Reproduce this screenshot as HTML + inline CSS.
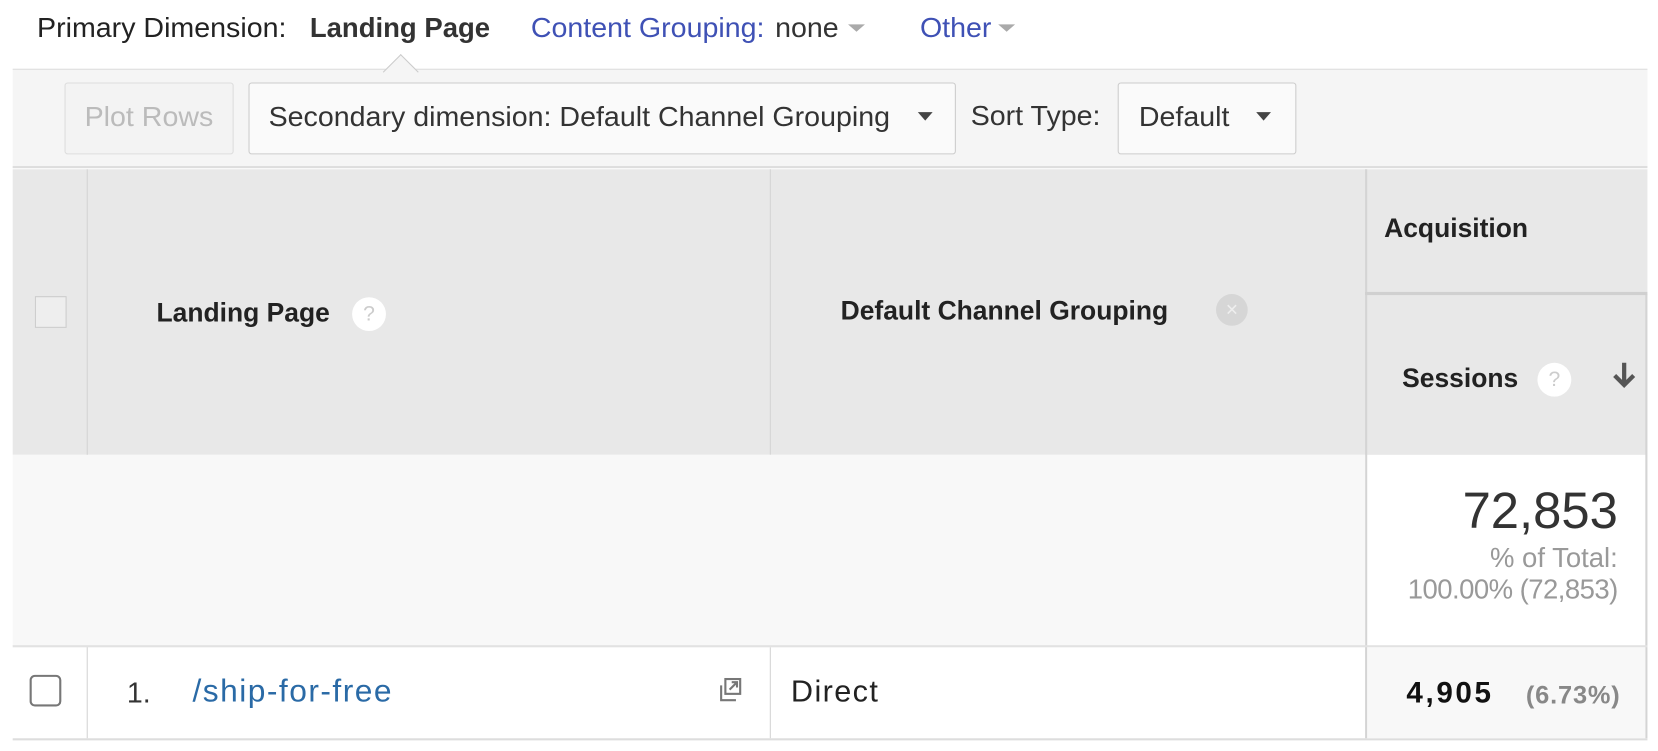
<!DOCTYPE html>
<html><head><meta charset="utf-8"><style>
*{margin:0;padding:0;box-sizing:border-box}
body{width:1658px;height:751px;background:#fff;position:relative;overflow:hidden;font-family:"Liberation Sans",Arial,sans-serif;color:#222}
#w{position:absolute;left:0;top:0;width:1568px;height:710px;transform-origin:0 0;transform:scale(1.0574,1.0577)}
.a{position:absolute;white-space:nowrap}
.t{position:absolute;white-space:nowrap;transform-origin:0 50%;transform:scaleX(1.04)}
.b{position:absolute;white-space:nowrap;transform-origin:0 50%}
.box{position:absolute}
</style></head><body><div id="w">
<div class="t" style="left:35px;top:11px;font-size:26px;color:#222">Primary Dimension:</div>
<div class="b" style="left:293px;top:11px;font-size:26px;font-weight:bold;color:#333">Landing Page</div>
<div class="t" style="left:502px;top:11px;font-size:26px;color:#3f51b5">Content Grouping:</div>
<div class="t" style="left:733px;top:11px;font-size:26px;color:#333">none</div>
<div class="a" style="left:802px;top:23px;width:0;height:0;border-left:8px solid transparent;border-right:8px solid transparent;border-top:7px solid #aaa"></div>
<div class="t" style="left:870px;top:11px;font-size:26px;color:#3f51b5">Other</div>
<div class="a" style="left:944px;top:23px;width:0;height:0;border-left:8px solid transparent;border-right:8px solid transparent;border-top:7px solid #aaa"></div>
<div class="box" style="left:12px;top:65px;width:1546px;height:94px;background:#f5f5f5;border-top:1px solid #ddd;border-bottom:2px solid #ddd"></div>
<div class="a" style="left:367px;top:56px;width:24px;height:24px;background:#f5f5f5;border-left:1px solid #ccc;border-top:1px solid #ccc;transform:rotate(45deg)"></div>
<div class="box" style="left:61px;top:78px;width:160px;height:68px;border:1px solid #ddd;border-radius:3px;background:#f3f3f3"></div>
<div class="t" style="left:80px;top:95px;font-size:26px;color:#bbb">Plot Rows</div>
<div class="box" style="left:235px;top:78px;width:669px;height:68px;border:1px solid #ccc;border-radius:3px;background:#fafafa"></div>
<div class="t" style="left:254px;top:95px;font-size:26px;color:#333">Secondary dimension: Default Channel Grouping</div>
<div class="a" style="left:868px;top:106px;border-left:7px solid transparent;border-right:7px solid transparent;border-top:8px solid #444"></div>
<div class="t" style="left:918px;top:94px;font-size:26px;color:#333">Sort Type:</div>
<div class="box" style="left:1057px;top:78px;width:169px;height:68px;border:1px solid #ccc;border-radius:3px;background:#fafafa"></div>
<div class="t" style="left:1077px;top:95px;font-size:26px;color:#333">Default</div>
<div class="a" style="left:1188px;top:106px;border-left:7px solid transparent;border-right:7px solid transparent;border-top:8px solid #444"></div>
<div class="box" style="left:12px;top:160px;width:1546px;height:270px;background:#e8e8e8"></div>
<div class="box" style="left:82px;top:160px;width:1px;height:538px;background:#d4d4d4"></div>
<div class="box" style="left:728px;top:160px;width:1px;height:270px;background:#d4d4d4"></div>
<div class="box" style="left:728px;top:612px;width:1px;height:86px;background:#d4d4d4"></div>
<div class="box" style="left:1291px;top:160px;width:2px;height:538px;background:#d4d4d4"></div>
<div class="box" style="left:1556px;top:278px;width:2px;height:420px;background:#d4d4d4"></div>
<div class="box" style="left:1291px;top:276px;width:267px;height:3px;background:#d0d0d0"></div>
<div class="box" style="left:33px;top:280px;width:30px;height:30px;border:1px solid #ccc;background:#eee"></div>
<div class="b" style="left:148px;top:282px;font-size:25px;font-weight:bold;color:#222">Landing Page</div>
<div class="a" style="left:333px;top:281px;width:32px;height:32px;border-radius:50%;background:#fff;color:#ccc;font-size:20px;text-align:center;line-height:32px">?</div>
<div class="b" style="left:795px;top:280px;font-size:25px;font-weight:bold;color:#222">Default Channel Grouping</div>
<div class="a" style="left:1150px;top:278px;width:30px;height:30px;border-radius:50%;background:#d6d6d6;color:#eee;font-size:20px;text-align:center;line-height:30px">×</div>
<div class="b" style="left:1309px;top:202px;font-size:25px;font-weight:bold;color:#222">Acquisition</div>
<div class="b" style="left:1326px;top:344px;font-size:25px;font-weight:bold;color:#222">Sessions</div>
<div class="a" style="left:1454px;top:343px;width:32px;height:32px;border-radius:50%;background:#fff;color:#ccc;font-size:20px;text-align:center;line-height:32px">?</div>
<svg class="a" style="left:1522px;top:340px" width="28" height="30" viewBox="0 0 28 30"><path d="M14 3v20M5 15l9 9 9-9" stroke="#555" stroke-width="4" fill="none"/></svg>
<div class="box" style="left:12px;top:430px;width:1279px;height:181px;background:#f8f8f8"></div>
<div class="box" style="left:12px;top:610px;width:1546px;height:2px;background:#e2e2e2"></div>
<div class="a" style="right:38px;top:456px;font-size:48px;color:#333">72,853</div>
<div class="a" style="right:38px;top:512px;font-size:26px;color:#999">% of Total:</div>
<div class="a" style="right:38px;top:542px;font-size:26px;color:#999;letter-spacing:-.5px">100.00% (72,853)</div>
<div class="box" style="left:12px;top:698px;width:1546px;height:2px;background:#ddd"></div>
<div class="box" style="left:1293px;top:612px;width:263px;height:86px;background:#f8f8f8"></div>
<div class="box" style="left:28px;top:638px;width:30px;height:30px;border:2px solid #777;border-radius:5px;background:#fff"></div>
<div class="b" style="left:120px;top:640px;font-size:27px;color:#333">1.</div>
<div class="b" style="left:182px;top:637px;font-size:30px;letter-spacing:1.4px;color:#2a6aa6">/ship-for-free</div>
<svg class="a" style="left:678px;top:640px" width="28" height="30" viewBox="0 0 28 30"><rect x="8" y="2" width="14" height="14" fill="none" stroke="#777" stroke-width="2"/><path d="M4 8v14h14" fill="none" stroke="#777" stroke-width="2"/><path d="M12 12l7-7M14 5h5v5" stroke="#777" stroke-width="2" fill="none"/></svg>
<div class="b" style="left:748px;top:638px;font-size:29px;letter-spacing:1.3px;color:#222">Direct</div>
<div class="a" style="left:1330px;top:639px;font-size:28px;font-weight:bold;letter-spacing:2.5px;color:#111">4,905</div>
<div class="a" style="left:1443px;top:644px;font-size:24px;font-weight:bold;letter-spacing:.8px;color:#888">(6.73%)</div>
</div></body></html>
